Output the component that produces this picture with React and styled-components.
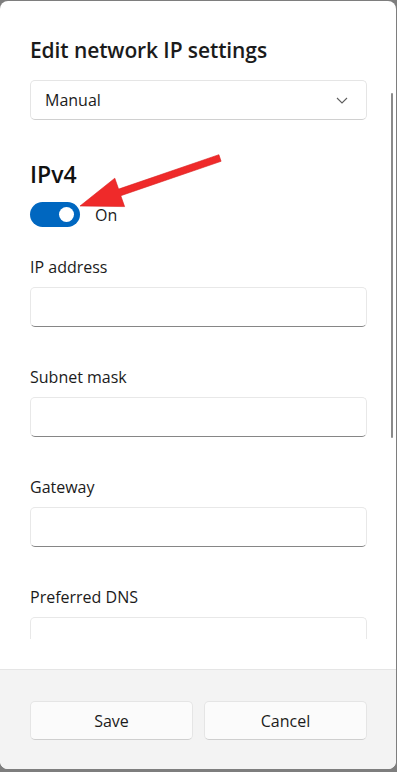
import React from 'react';
import styled, { createGlobalStyle } from 'styled-components';

const GlobalStyle = createGlobalStyle`
  html, body {
    margin: 0;
    padding: 0;
    background: #7e7e7e;
  }
  body {
    font-family: "Open Sans", "Noto Sans", sans-serif;
    color: #1b1b1b;
  }
`;

const Dialog = styled.div`
  position: relative;
  width: 396px;
  height: 768px;
  margin-top: 1px;
  background: #ffffff;
  border-radius: 8px;
  overflow: hidden;
  display: flex;
  flex-direction: column;
`;

const Content = styled.div`
  position: relative;
  flex: 1;
  min-height: 0;
  display: flex;
  flex-direction: column;
  padding-bottom: 30px;
`;

const Scroller = styled.div`
  flex: 1;
  min-height: 0;
  overflow: hidden;
  padding: 35px 29px 0 30px;
`;

const Title = styled.h1`
  margin: 0;
  font-size: 21px;
  line-height: 28px;
  font-weight: 600;
  letter-spacing: -0.1px;
`;

const Select = styled.div`
  margin-top: 16px;
  height: 40px;
  box-sizing: border-box;
  border: 1px solid #e5e5e5;
  border-bottom-color: #d0d0d0;
  border-radius: 5px;
  display: flex;
  align-items: center;
  justify-content: space-between;
  padding: 0 18px 0 14px;
  font-size: 16px;
`;

const Heading = styled.h2`
  margin: 40px 0 0;
  font-size: 23px;
  line-height: 29px;
  font-weight: 600;
  color: #111;
`;

const ToggleRow = styled.div`
  margin-top: 13px;
  display: flex;
  align-items: center;
  gap: 15px;
  font-size: 16px;
`;

const Toggle = styled.div`
  width: 50px;
  height: 25px;
  border-radius: 13px;
  background: ${(p) => (p.on ? '#0067c0' : '#fff')};
  display: flex;
  align-items: center;
  justify-content: ${(p) => (p.on ? 'flex-end' : 'flex-start')};
  padding: 0 6px;
  box-sizing: border-box;
`;

const Knob = styled.span`
  width: 15px;
  height: 15px;
  border-radius: 50%;
  background: #ffffff;
`;

const Field = styled.div`
  margin-top: ${(p) => p.gap}px;
`;

const Label = styled.div`
  font-size: 16px;
  line-height: 24px;
`;

const Input = styled.div`
  margin-top: 8px;
  height: 40px;
  box-sizing: border-box;
  border: 1px solid #e8e8e8;
  border-bottom: 1px solid #868686;
  border-radius: 5px;
  background: #ffffff;
`;

const Scrollbar = styled.div`
  position: absolute;
  right: 3px;
  top: 92px;
  width: 2px;
  height: 345px;
  border-radius: 1px;
  background: #8a8a8a;
`;

const Arrow = styled.svg`
  position: absolute;
  left: 0;
  top: 0;
  pointer-events: none;
`;

const Footer = styled.div`
  height: 100px;
  box-sizing: border-box;
  background: #f3f3f3;
  border-top: 1px solid #e5e5e5;
  padding: 31px 29px 0 30px;
  display: grid;
  grid-template-columns: 1fr 1fr;
  column-gap: 11px;
  align-items: start;
`;

const Button = styled.button`
  height: 39px;
  border: 1px solid #e5e5e5;
  border-bottom-color: #cfcfcf;
  border-radius: 5px;
  background: #fbfbfb;
  font-family: inherit;
  font-size: 16px;
  color: #1b1b1b;
`;

const fields = [
  { label: 'IP address', gap: 28 },
  { label: 'Subnet mask', gap: 38 },
  { label: 'Gateway', gap: 38 },
  { label: 'Preferred DNS', gap: 38 },
];

export default function App() {
  return (
    <>
      <GlobalStyle />
      <Dialog>
        <Content>
          <Scroller>
            <Title>Edit network IP settings</Title>
            <Select>
              <span>Manual</span>
              <svg width="12" height="7" viewBox="0 0 12 7">
                <path d="M1 1l5 5 5-5" fill="none" stroke="#5f5f5f" strokeWidth="1.1" />
              </svg>
            </Select>
            <Heading>IPv4</Heading>
            <ToggleRow>
              <Toggle on>
                <Knob />
              </Toggle>
              <span>On</span>
            </ToggleRow>
            {fields.map((f) => (
              <Field key={f.label} gap={f.gap}>
                <Label>{f.label}</Label>
                <Input />
              </Field>
            ))}
          </Scroller>
          <Scrollbar />
        </Content>
        <Footer>
          <Button>Save</Button>
          <Button>Cancel</Button>
        </Footer>
        <Arrow width="396" height="260" viewBox="0 0 396 260">
          <polygon
            points="80,205 114.8,177.2 118.6,188.1 218.9,153.7 221.1,160.3 120.8,194.7 124.6,205.6"
            fill="#ef2a2a"
            stroke="#d81f1f"
            strokeWidth="0.6"
            strokeLinejoin="round"
          />
        </Arrow>
      </Dialog>
    </>
  );
}
